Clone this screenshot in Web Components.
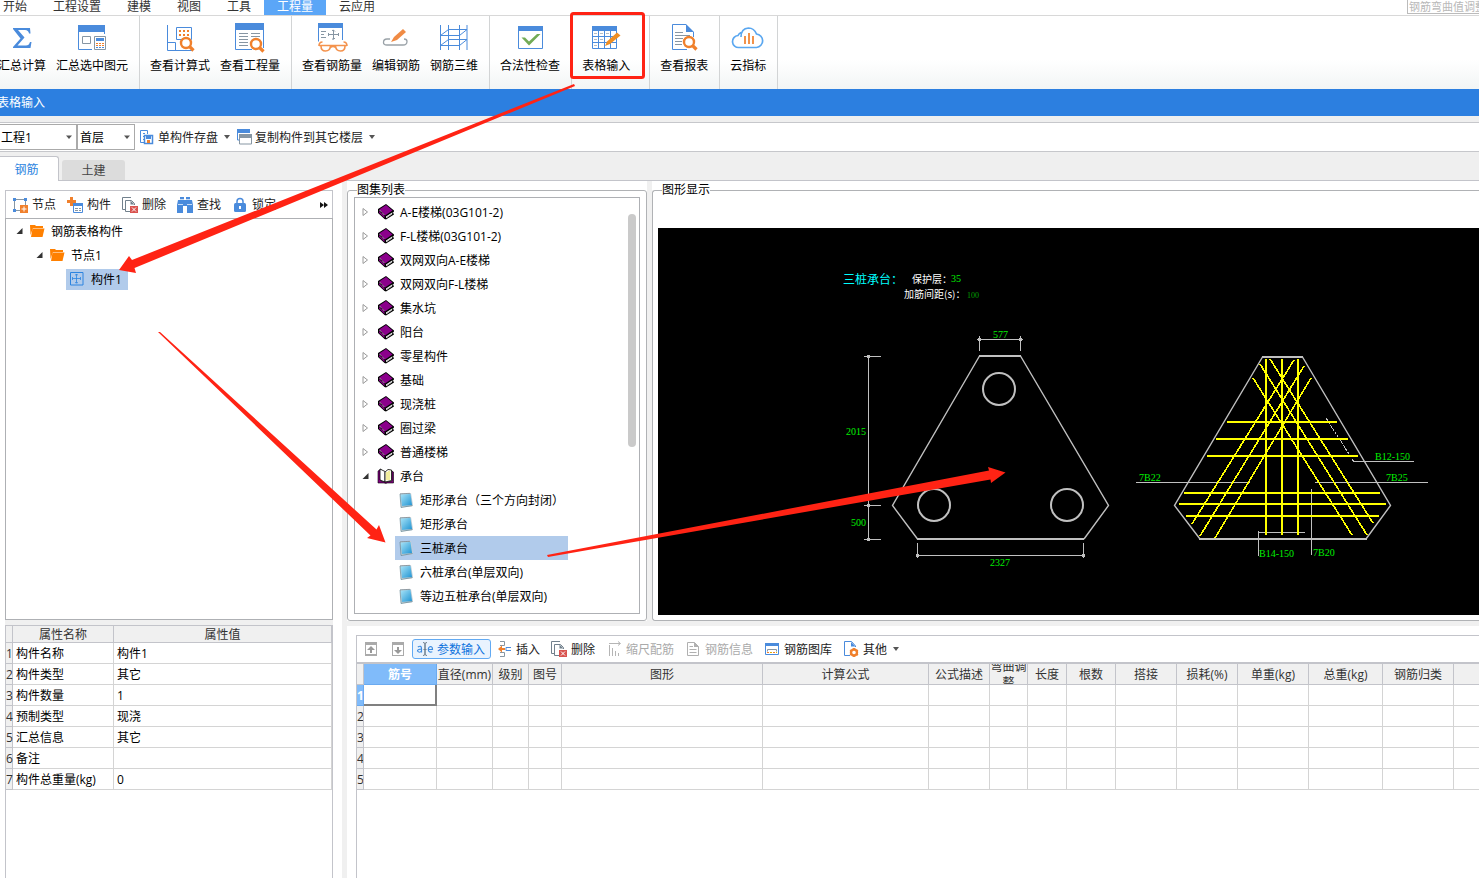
<!DOCTYPE html>
<html lang="zh-CN">
<head>
<meta charset="utf-8">
<title>表格输入</title>
<style>
html, body { margin: 0; height: 100%; }
body { font: 12px/16px "Open Sans", "Noto Sans CJK SC", sans-serif; color: #000; background: #fff; overflow: hidden; }
</style>
</head>
<body>
<rebar-app></rebar-app>
<script>
const define = (name, html, setup) => {
  const tpl = document.createElement('template');
  tpl.innerHTML = '<style>*{box-sizing:border-box}button,input,select{font:inherit;color:inherit;margin:0}</style>' + html;
  customElements.define(name, class extends HTMLElement {
    constructor() {
      super();
      this.attachShadow({ mode: 'open' }).append(tpl.content.cloneNode(true));
    }
    connectedCallback() {
      if (setup && !this.ready) { this.ready = true; setup.call(this, this.shadowRoot); }
    }
  });
};

const B = '#4a8bdc', O = '#f0802c', G = '#8796a3';
const lens = (x, y) => `<circle cx="${x}" cy="${y}" r="5" fill="#fff" stroke="${O}" stroke-width="2.4"/><path d="M${x + 3.5} ${y + 3.5}l4 4" stroke="${O}" stroke-width="3.2"/>`;
const ICONS = {
  sigma: [32, `<path d="M7 6H24L24.500 11.500H23Q22.500 8 19 8H12L18.500 15.500L11.500 23.500H20Q23 23.500 24 20H25.500L24.500 26H7V25L14.500 16.500L7 7Z" fill="${B}"/>`],
  pick: [32, `<path d="M2.500 9V27.500H16M28.500 9V12" fill="none" stroke="${B}"/><path d="M2 3h27v7H2z" fill="${B}"/><path d="M6.500 14.500h8v7h-8z" fill="none" stroke="${G}"/><path d="M18.500 14.500h11v13h-11z" fill="#fff" stroke="${G}"/><path d="M20 16h8v3h-8z" fill="${B}"/><path d="M20 21h2v1h-2zm3 0h2v1h-2zm3 0h2v1h-2zM20 23h2v1h-2zm3 0h2v1h-2zm3 0h2v1h-2z" fill="${O}"/><path d="M20 25h2v1h-2zm3 0h2v1h-2zm3 0h2v1h-2z" fill="${B}"/>`],
  formula: [32, `<g fill="none" stroke="${B}"><path d="M3.500 3V28.500H29M3.500 20.500H11.500V28"/><path d="M12.500 5.500h15v12h-15z"/></g><path d="M15 8h2v2h-2zm4 0h2v2h-2zm4 0h2v2h-2zM15 12h2v2h-2zm4 0h2v2h-2zm4 0h2v2h-2z" fill="${O}"/>${lens(22, 21)}`],
  quantity: [32, `<path d="M1.500 6V27.500H18M29.500 6V26" fill="none" stroke="${B}"/><path d="M1 1h29v7H1z" fill="${B}"/><path d="M5 11.500h9M17 11.500h9M5 14.500h9M17 14.500h9M5 17.500h9M5 20.500h9M5 23.500h9" stroke="${G}"/>${lens(22, 22)}`],
  rebarqty: [32, `<path d="M2.500 5V19.500M26.500 5V18" stroke="${B}"/><path d="M2 1h25v5H2z" fill="${B}"/><path d="M5 9.500h5M5 12.500h3M5 15.500h5M17.500 8v9M12.500 12.500h10" stroke="${G}"/><path d="M16 8.500q2-1 3 1M16 17q2 1 3-1M12.500 11v3M22.500 11v3" fill="none" stroke="${G}"/><g fill="none" stroke="#f4924c" stroke-width="1.600"><path d="M3 24Q3 20 6.500 20M31 24Q31 20 27.500 20"/><path d="M3 23.500H31M14.500 25.500Q17 23.500 19.500 25.500"/><path d="M5 24Q5 29 9.500 29Q14 29 14.500 24M19.500 24Q20 29 24.500 29Q29 29 29 24"/></g>`],
  editbar: [32, `<path d="M10 17H7Q3.500 17 3.500 20.500Q3.500 23 7 23H23Q27 23 27 19.500Q27 17 24 17" fill="none" stroke="#9aa2a8" stroke-width="1.300"/><path d="M11 20L14 15L23 7L26 10L17 18Z" fill="#f08b45"/>`],
  bars3d: [32, `<path d="M2.500 3V28M10.500 3V28M21.500 3V28M29 3V28M10.500 7.500H29M2.500 13.500H21.500M10.500 17.500H29M2.500 23.500H21.500M2.500 13.500L10.500 7.500M21.500 13.500L29 7.500M2.500 23.500L10.500 17.500M21.500 23.500L29 17.500" fill="none" stroke="${B}"/>`],
  check: [32, `<path d="M4.500 5V26.500H28.500V5" fill="none" stroke="${B}"/><path d="M4 4h25v5H4z" fill="${B}"/><path d="M7.500 15.500H11L15 19.500L23 12H26.500L15 23.500Z" fill="#72ab56"/>`],
  gridin: [32, `<path d="M2.500 5V26.500H26.500V5" fill="none" stroke="${B}"/><path d="M2 4h25v5H2z" fill="${B}"/><path d="M3 14.500H26M3 20.500H26M8.500 9V26M14.500 9V26M20.500 9V26" stroke="${B}"/><path d="M4 11.500h3M10 11.500h3M16 11.500h3M4 17.500h3M10 17.500h3M4 23.500h3" stroke="#b4bcc4"/><path d="M15 24L17 19.500L27 10.500L30.500 13.500L20 22Z" fill="#ef8e22"/>`],
  report: [32, `<path d="M18 2.500H4.500V27.500H19M25.500 10V15" fill="none" stroke="${B}"/><path d="M18 2L26 10H18z" fill="${B}"/><path d="M7 10.500H15M7 13.500H22M7 16.500H15M7 19.500H14M7 22.500H14" stroke="${G}"/>${lens(21, 20)}`],
  cloud: [32, `<path d="M9 25.500H7A6 6 0 0 1 6 13.500A6 6 0 0 1 9 10.500M9 15Q9 6.500 16.500 6Q22 6 24.500 12A7 6.800 0 0 1 24.500 25.500H8" fill="none" stroke="#5aa7f0" stroke-width="1.700"/><path d="M13 14v8M17 11v11M21 14v8" stroke="${O}" stroke-width="1.700"/>`],
  save: [16, `<path d="M7 13.500H.5V1.500H7.500V5" fill="none" stroke="${B}"/><path d="M3 4h2v1H3zm0 3h2v1H3zm0 3h2v1H3z" fill="${B}"/><path d="M4.500 6.500h8v8h-8z" fill="#fff" stroke="${B}" stroke-width="1.500"/><path d="M6 7h5v3H6z" fill="${B}"/><path d="M7 11h3v3H7z" fill="${O}"/>`],
  copy: [16, `<path d="M.5 2V11H2M12.500 2V4" fill="none" stroke="${B}"/><path d="M0 0h13v4H0z" fill="${B}"/><path d="M2.500 6.500h12v8.500h-12z" fill="#fff" stroke="${G}"/><path d="M2 5h13v4H2z" fill="${G}"/>`],
  node: [16, `<path d="M2.500 2.500h11v11h-11z" fill="none" stroke="${G}"/><path d="M1 1h3v3H1zM12 1h3v3h-3zM1 12h3v3H1z" fill="${B}"/><path d="M8 8h8v8H8z" fill="${O}"/><path d="M12 9.500v5M9.500 12h5" stroke="#fff"/>`],
  member: [16, `<path d="M3 0h3v3h3v3H6v3H3V6H0V3h3z" fill="${O}"/><path d="M6.500 7.500h9v8h-9z" fill="#fff" stroke="${B}"/><path d="M6 6h10v3H6z" fill="${B}"/><path d="M8 11.500h3M12 11.500h2M8 13.500h3M12 13.500h2" stroke="${G}"/>`],
  remove: [16, `<path d="M3 12.500H.5V.5H9M3.500 14.500V3.500H9.500L12.500 6.500V8M3.500 14.500H8" fill="none" stroke="#72818d"/><path d="M8.500 3.500v4h4z" fill="#72818d"/><path d="M8 9h8v7H8z" fill="#d9534f"/><path d="M10 10.500l4 4M14 10.500l-4 4" stroke="#fff"/>`],
  find: [16, `<path d="M3 0h4v3h2V0h4v3h2l1 5v8H10V9H6v7H0V8l1-5h2z" fill="${B}"/><path d="M1 7.500h5M10 7.500h5M3 2.500h4M9 2.500h4" stroke="#fff" stroke-width=".7"/>`],
  lock: [16, `<path d="M5 7V4.500a3 3 0 0 1 6 0V7" fill="none" stroke="${B}" stroke-width="1.500"/><rect x="2" y="6" width="12" height="9" rx="1.500" fill="${B}"/><path d="M7 9h2v3H7z" fill="#fff"/>`],
  folder: [16, `<path d="M1 2h5l1 1h7v2H4L1.500 12z" fill="#ff8000"/><path d="M3.500 5.500h12l-2 8.500H2z" fill="#ff8000"/>`],
  part: [16, `<path d="M1.500 1.500h12.500v12.500H1.500z" fill="none" stroke="#2c84e0"/><path d="M7.500 3v9M3.500 7.500h8M6 4q2-1 3 0M6 11.500q2 1 3 0M3.500 6v3M11.500 6v3" fill="none" stroke="#2c84e0" stroke-width=".8"/>`],
  book: [16, `<path d="M8 0L16 6.500V7.500L15 8.500L16 10.500L8 15.500L6.500 15L0 9V5Z" fill="#000"/><path d="M8 1L14.500 6.500L7 11.500L1.200 5.500Z" fill="#8b008b"/><path d="M1 7L6.500 12v2L1 8.700Z" fill="#8b008b"/><path d="M8 12.500L14.500 8.200L14 10.300L8.300 14.200Z" fill="#fff"/><path d="M1.500 6L7 11.800" stroke="#fff" stroke-width=".9" stroke-dasharray="1 1"/><path d="M9 13.200l5-3.300" stroke="#888" stroke-width=".6"/>`],
  bookopen: [16, `<path d="M0 3L3 1V13L8 14L14 13V3L15.500 4V15H9L8 15.500L6 15H0Z" fill="#800080" stroke="#000" stroke-width=".6"/><path d="M2 1L7 3.500V14L2 12Z" fill="#fff" stroke="#000" stroke-width=".8"/><path d="M7 4L10 1.500L13.500 2V12.500L7 14Z" fill="#fffef0" stroke="#000" stroke-width=".8"/><path d="M9 4v8M11 3v9" stroke="#e3dc48"/>`],
  note: [16, `<defs><linearGradient id="n" x2="1" y2="1"><stop stop-color="#a8e4f8"/><stop offset="1" stop-color="#1f93d2"/></linearGradient></defs><path d="M2 1.500L13 1L15 13L14 14.500L3 15.500Z" fill="#c2ced6"/><path d="M2.500 2.500L12.500 2L14 13L4 14Z" fill="url(#n)"/><path d="M2.500 1.800L12.500 1.300" stroke="#526069" stroke-dasharray="1 1"/><path d="M2 2L3 15.500L14.500 13.500" fill="none" stroke="#527887" stroke-width=".6"/>`],
  up: [16, `<path d="M2 1h12v3H2zM2 13h12v2H2z" fill="#aaa"/><path d="M2.500 2v12M13.500 2v12" stroke="#aaa"/><path d="M8 5l-4 4h3v3h2V9h3z" fill="#999"/>`],
  down: [16, `<path d="M2 1h12v3H2zM2 14h12v1H2z" fill="#aaa"/><path d="M2.500 2v12M13.500 2v12" stroke="#aaa"/><path d="M8 13l-4-4h3V6h2v3h3z" fill="#999"/>`],
  param: [16, `<g fill="none" stroke="#3d8be0" stroke-width="1.200"><path d="M.8 6Q4.500 4 4.500 7.500V11.500M4.500 8Q.5 8 .5 10Q2.500 12.500 4.500 10"/><path d="M11.500 8.500H15.500Q15.500 5.500 13.500 5.500Q11.300 6 11.300 8.500Q11.500 12 15.300 10.800"/></g><path d="M6 1.500q2 0 2 1.500v10q0 1.500-2 1.500M10 1.500q-2 0-2 1.500v10q0 1.500 2 1.500M6.500 8.500h3" fill="none" stroke="#6f7f8c"/>`],
  insert: [16, `<path d="M4 .5H8.500V4.500H4M4 11.500H8.500V15.500H4" fill="none" stroke="${G}"/><path d="M15 6.500h-5v3h5" fill="none" stroke="${B}"/><path d="M2 8L6 4.500V7H9V9H6V11.500Z" fill="${O}"/>`],
  scale: [16, `<path d="M3.500 4V15M6.500 7V15M9.500 10V15M12.500 12V15" stroke="#b5b5b5"/><path d="M3 2.500H14M12 .5L14.500 2.500L12 4.500" fill="none" stroke="#b5b5b5"/>`],
  info: [16, `<path d="M9.500 1.500H2.500V14.500H13.500V5.500Z" fill="none" stroke="#b0b0b0"/><path d="M9 1v5h5z" fill="#b0b0b0"/><path d="M4.500 5.500H8M4.500 8.500H11.500M4.500 11.500H11.500" stroke="#b0b0b0"/>`],
  library: [16, `<path d="M1.500 3V13.500H14.500V3" fill="#fff" stroke="${B}"/><path d="M1 2h14v3H1z" fill="${B}"/><path d="M3.500 10.500V8.500H12.500V10.500" fill="none" stroke="${G}"/><path d="M3 11h2v1H3zm6 0h2v1H9z" fill="${O}"/><path d="M6 11h2v1H6zm6 0h1v1h-1z" fill="#e0b000"/>`],
  other: [16, `<path d="M8.500 .5H1.500V14.500H7M8.500 .5L12.500 5V6" fill="none" stroke="${B}"/><path d="M8 1v4.500h4.500z" fill="${B}"/><circle cx="11" cy="11.500" r="3" fill="none" stroke="${O}" stroke-width="2.400"/><path d="M11 7v2M11 14v2M7 9.300l2 1M13 13l2 1M7 13.700l2-1M13 10.300l2-1" stroke="${O}" stroke-width="1.800"/>`],
  more: [16, `<path d="M4 5l4 3-4 3zM8 5l4 3-4 3z" fill="#111"/>`],
  caret: [8, `<path d="M1 2.500h6L4 6z" fill="#555"/>`],
  closed: [8, `<path d="M1 .5V7.500L5.500 4Z" fill="#fff" stroke="#999"/>`],
  opened: [8, `<path d="M6.500 1V7H.5Z" fill="#333"/>`]
};

define('ui-icon', `<style>:host{display:block;flex:none}svg{display:block;overflow:visible}</style><svg aria-hidden="true"></svg>`, function (root) {
  const [size, art] = ICONS[this.getAttribute('name')], svg = root.querySelector('svg');
  svg.setAttribute('width', size);
  svg.setAttribute('height', size);
  svg.innerHTML = art;
});

/* Puts the icon named by the host's icon attribute in the template's .icon place. */
function placeIcon(host, root) {
  const icon = document.createElement('ui-icon');
  icon.setAttribute('name', host.getAttribute('icon'));
  root.querySelector('.icon').replaceWith(icon);
}

define('menu-bar', `<style>
:host{display:flex;height:16px;border-bottom:1px solid #d8d8d8;background:#fff;color:#333;overflow:hidden}
nav{display:flex;margin-left:-10px;height:16px}
a{padding:0 13px;line-height:14px;color:inherit;text-decoration:none}
a[aria-current]{background:#5ba6f7;color:#fff}
input{margin-left:auto;width:72px;height:14px;padding:0 0 0 1px;border:solid #bbb;border-width:0 0 1px 1px;border-radius:0;outline:0;background:#fff;font-size:11px;line-height:13px}
input::placeholder{color:#b8b8b8;opacity:1}
</style><nav><a href="#">开始</a><a href="#">工程设置</a><a href="#">建模</a><a href="#">视图</a><a href="#">工具</a><a href="#" aria-current="page">工程量</a><a href="#">云应用</a></nav><input aria-label="搜索" placeholder="钢筋弯曲值调整">`);

define('ribbon-button', `<style>
:host{display:block}
button{display:flex;flex-direction:column;align-items:center;gap:4px;padding:6px 5px 0;border:0;background:none;white-space:nowrap}
</style><button><span class="icon"></span><span><slot></slot></span></button>`, function (root) { placeIcon(this, root); });

define('ribbon-group', `<style>
:host{display:flex;padding:0 6px 0 5px;border-right:1px solid #d2d4d5}
:host([wide]){padding-right:14px}
</style><slot></slot>`);

define('ribbon-bar', `<style>
:host{display:block;height:73px;overflow:hidden;background:linear-gradient(#fff 60%,#f2f5f5)}
div{display:flex;height:100%;margin-left:-12px}
</style><div>
<ribbon-group><ribbon-button icon="sigma">汇总计算</ribbon-button><ribbon-button icon="pick">汇总选中图元</ribbon-button></ribbon-group>
<ribbon-group><ribbon-button icon="formula">查看计算式</ribbon-button><ribbon-button icon="quantity">查看工程量</ribbon-button></ribbon-group>
<ribbon-group><ribbon-button icon="rebarqty">查看钢筋量</ribbon-button><ribbon-button icon="editbar">编辑钢筋</ribbon-button><ribbon-button icon="bars3d">钢筋三维</ribbon-button></ribbon-group>
<ribbon-group><ribbon-button icon="check">合法性检查</ribbon-button></ribbon-group>
<ribbon-group wide><ribbon-button icon="gridin">表格输入</ribbon-button></ribbon-group>
<ribbon-group><ribbon-button icon="report">查看报表</ribbon-button></ribbon-group>
<ribbon-group><ribbon-button icon="cloud">云指标</ribbon-button></ribbon-group>
</div>`);

define('tool-button', `<style>
:host{display:block;flex:none}
button{display:flex;align-items:center;gap:var(--tool-gap,4px);height:20px;padding:0 var(--tool-end,5px) 0 4px;border:1px solid transparent;border-radius:3px;background:none;white-space:nowrap;color:#222}
:host([active]) button{background:#e9f3fe;border-color:#62aaf3;color:#0f73dd}
:host([off]) button{color:#aaa}
.text{padding-top:1px}
:host([label]) .text{display:none}
:host([menu]) button::after{content:"";margin-left:calc(6px - var(--tool-gap,4px));border:3px solid transparent;border-top:4px solid #555;border-bottom:0}
</style><button><span class="icon"></span><span class="text"><slot></slot></span></button>`, function (root) {
  placeIcon(this, root);
  const button = root.querySelector('button');
  if (this.hasAttribute('off')) button.disabled = true;
  if (this.hasAttribute('label')) button.setAttribute('aria-label', this.getAttribute('label'));
});

define('pick-list', `<style>
:host{display:flex;position:relative;height:26px}
select{width:100%;height:100%;appearance:none;border:1px solid #aaa;border-radius:0;padding:2px 16px 0 2px;background:#fff;color:#000;outline:0}
ui-icon{position:absolute;right:4px;top:9px;pointer-events:none}
</style><select></select><ui-icon name="caret"></ui-icon>`, function (root) {
  const s = root.querySelector('select');
  s.setAttribute('aria-label', this.getAttribute('label'));
  s.add(new Option(this.getAttribute('value')));
});

define('project-bar', `<style>
:host{display:flex;align-items:center;height:36px;border-top:6px solid #efefef;background:#fff;box-shadow:inset 0 1px #c6c7cb,inset 0 -1px #c6c7cb;overflow:hidden;--tool-gap:2px;--tool-end:1px}
.p{width:79px;margin-left:-2px}.f{width:58px}
</style><pick-list class="p" label="工程" value="工程1"></pick-list><pick-list class="f" label="楼层" value="首层"></pick-list><tool-button icon="save" menu>单构件存盘</tool-button><tool-button icon="copy" menu>复制构件到其它楼层</tool-button>`);

define('kind-tabs', `<style>
:host{display:flex;align-items:flex-end;gap:3px;height:29px;background:#efefef;box-shadow:inset 0 -1px #c3c4ca}
button{border:0;padding:2px 0 0}
.on{width:59px;height:25px;padding-right:5px;background:#fff;color:#2c84e0;border:solid #c3c4ca;border-width:1px 1px 0 0;border-radius:0 3px 0 0}
.off{width:63px;height:20px;margin-bottom:1px;background:#dcdcdc;color:#444;border-radius:3px 3px 0 0}
</style><button class="on">钢筋</button><button class="off">土建</button>`);

define('tree-item', `<style>
:host{display:flex;align-items:center;height:24px;padding-left:var(--pad)}
:host([level="1"]){padding-left:calc(var(--pad) + 20px)}
:host([level="2"]){padding-left:calc(var(--pad) + 40px)}
.twist{width:var(--twist);flex:none}
.label{display:flex;align-items:center;gap:6px;height:var(--pick-h);padding:0 6px 0 3px;min-width:var(--pick-w);white-space:nowrap}
.text{padding-top:2px}
:host([selected]) .label{background:#b1cbeb}
</style><span class="twist"></span><span class="label"><span class="icon"></span><span class="text"><slot></slot></span></span>`, function (root) {
  placeIcon(this, root);
  const state = this.getAttribute('state');
  if (state) root.querySelector('.twist').innerHTML = `<ui-icon name="${state}"></ui-icon>`;
});

define('member-panel', `<style>
:host{display:flex;flex-direction:column;min-height:0}
.bar{display:flex;align-items:center;height:28px;padding-left:1px;border:1px solid #c3c4ca;border-bottom:0}
.bar tool-button:last-child{margin-left:auto;margin-right:-6px}
.tree{flex:1;min-height:0;border:1px solid #aeb0b4;--pad:10px;--twist:10px;--pick-h:21px;--pick-w:0}
</style><div class="bar"><tool-button icon="node">节点</tool-button><tool-button icon="member">构件</tool-button><tool-button icon="remove">删除</tool-button><tool-button icon="find">查找</tool-button><tool-button icon="lock">锁定</tool-button><tool-button icon="more" label="更多"></tool-button></div>
<div class="tree"><tree-item icon="folder" state="opened">钢筋表格构件</tree-item><tree-item icon="folder" state="opened" level="1">节点1</tree-item><tree-item icon="part" level="2" selected>构件1</tree-item></div>`);

define('property-grid', `<style>
:host{display:block;border:solid #c3c4ca;border-width:1px 1px 0}
table{width:100%;table-layout:fixed;border-collapse:separate;border-spacing:0}
th,td{height:21px;padding:2px 0 0;border:solid #d4d4d4;border-width:0 1px 1px 0;font-weight:400;text-align:left;white-space:nowrap;line-height:16px}
td{padding-left:3px}
th{background:#f0f0f0;color:#333;border-color:#c3c4ca}
thead th{height:17px;line-height:14px;text-align:center}
</style><table><colgroup><col style="width:7px"><col style="width:101px"><col></colgroup><thead><tr><th></th><th>属性名称</th><th>属性值</th></tr></thead><tbody></tbody></table>`, function (root) {
  const rows = [['构件名称', '构件1'], ['构件类型', '其它'], ['构件数量', '1'], ['预制类型', '现浇'], ['汇总信息', '其它'], ['备注', ''], ['构件总重量(kg)', '0']];
  root.querySelector('tbody').innerHTML = rows.map((r, i) => `<tr><th>${i + 1}</th><td>${r[0]}</td><td>${r[1]}</td></tr>`).join('');
});

define('group-box', `<style>
:host{display:flex;min-width:0;min-height:0}
fieldset{flex:1;display:flex;min-width:0;min-height:0;margin:0;padding:0 6px 6px;border:1px solid #b0b2b5;border-radius:3px}
:host([bleed]) fieldset{padding:31px 0 5px 5px;border-right:0;border-radius:3px 0 0 3px}
legend{padding:0;margin-left:3px;height:14px;line-height:14px;background:#fff}
:host([bleed]) legend{margin-left:4px}
</style><fieldset><legend></legend><slot></slot></fieldset>`, function (root) { root.querySelector('legend').textContent = this.getAttribute('label'); });

define('atlas-tree', `<style>
:host{display:block;position:relative;flex:1;min-width:0;padding-top:2px;border:1px solid #aeb0b4;overflow:hidden;--pad:7px;--twist:13px;--pick-h:24px;--pick-w:173px}
i{position:absolute;right:3px;top:16px;width:8px;height:233px;border-radius:4px;background:#cacaca}
</style><div></div><i></i>`, function (root) {
  const books = ['A-E楼梯(03G101-2)', 'F-L楼梯(03G101-2)', '双网双向A-E楼梯', '双网双向F-L楼梯', '集水坑', '阳台', '零星构件', '基础', '现浇桩', '圈过梁', '普通楼梯'];
  const caps = ['矩形承台（三个方向封闭）', '矩形承台', '三桩承台', '六桩承台(单层双向)', '等边五桩承台(单层双向)'];
  root.querySelector('div').innerHTML = books.map(b => `<tree-item icon="book" state="closed">${b}</tree-item>`).join('')
    + '<tree-item icon="bookopen" state="opened">承台</tree-item>'
    + caps.map((c, i) => `<tree-item icon="note" level="1"${i === 2 ? ' selected' : ''}>${c}</tree-item>`).join('');
});

define('cap-drawing', `<style>
:host{display:block;flex:1;min-width:0;background:#000}
svg{display:block;width:100%;height:100%}
.w{fill:none;stroke:#c0c0c0;shape-rendering:crispEdges}
.slope{fill:none;stroke:#c0c0c0;stroke-width:1.4}
.y{fill:none;stroke:#ff0;stroke-width:2;shape-rendering:crispEdges}
.y.slope{stroke:#ff0;stroke-width:1.6}
.g{fill:#00f000;font:10px "Liberation Serif",serif}
.c{fill:#fff;font:10px "Noto Sans CJK SC",sans-serif}
.h{fill:#0ff;font:12px "Noto Sans CJK SC",sans-serif}
.s{fill:#00a000;font-size:8px}
</style><svg role="img" aria-label="三桩承台"><g transform="translate(-658 -228)">
<path class="slope" d="M979.500 356L892.500 505.500L917.500 539M1020.500 356L1108.500 505.500L1084 539M1262.500 357L1174.500 505.500L1200 539M1302.500 357L1390.500 505.500L1366 539"/>
<path class="w" stroke-width="2" d="M979 356H1021M917 539H1084M1262 357H1303M1199 539H1367"/>
<g class="w" stroke-width="2" style="shape-rendering:auto"><circle cx="999" cy="389" r="16"/><circle cx="934" cy="505" r="16"/><circle cx="1067" cy="505" r="16"/></g>
<path class="w" d="M868.500 356V540M864 356.500H881M864 505.500H881M864 539.500H881M979.500 336V351M1020.500 336V351M977 339.500H1023M917.500 543V558M1083.500 543V558M916 555.500H1085M1136 482.500H1250M1315 482.500H1428M1353 461.500H1414M1258.500 531V556M1258 532.500H1305M1311.500 489V555"/>
<path class="w" stroke-width="3" d="M867 356.500h3M867 505.500h3M867 539.500h3M978 339.500h3M1019 339.500h3M916 555.500h3M1082 555.500h3"/>
<path class="w" stroke-dasharray="3 1" d="M1326 418L1354 462"/>
<path class="y" d="M1266 359V535M1282 359V535M1298 359V535M1227 422H1337M1216 439H1348M1207 456H1358M1184 493H1380M1179 504H1386M1186 516H1379"/>
<path class="y slope" d="M1294 360L1192 524M1304 366L1200 536M1311 378L1215 538M1270 359L1373 523M1260 364L1367 535M1253 378L1352 535"/>
<text class="h" x="843" y="284">三桩承台：</text><text class="c" x="912" y="283">保护层：</text><text class="g" x="951" y="282">35</text>
<text class="c" x="904" y="298">加筋间距(s)：</text><text class="g s" x="967" y="298">100</text>
<g class="g"><text x="993" y="338">577</text><text x="846" y="435">2015</text><text x="851" y="526">500</text><text x="990" y="566">2327</text><text x="1139" y="481">7B22</text><text x="1386" y="481">7B25</text><text x="1375" y="460">B12-150</text><text x="1259" y="557">B14-150</text><text x="1313" y="556">7B20</text></g>
</g></svg>`);

define('rebar-grid', `<style>
:host{display:flex;flex-direction:column;min-width:0;padding:9px 0 0 9px;background:#fff}
.box{flex:1;border:solid #c3c4ca;border-width:1px 0 0 1px;min-height:0;overflow:hidden}
.bar{display:flex;align-items:center;height:28px;padding-left:1px;border-bottom:2px solid #c3c4ca}
table{width:100%;table-layout:fixed;border-collapse:separate;border-spacing:0}
th,td{height:21px;padding:0;border:solid #d4d4d4;border-width:0 1px 1px 0;font-weight:400;white-space:nowrap}
th:last-child,td:last-child{border-right:0}
th{background:#f0f0f0;color:#333;border-color:#c3c4ca;text-align:center}
thead th div{display:flex;align-items:center;justify-content:center;height:20px;padding-top:2px;overflow:hidden;line-height:16px}
thead th.wrap div{white-space:normal}
tbody th{padding-top:2px;text-align:left;overflow:hidden;border-right-width:1px}
th.on{background:#80bbfa;border-color:#6aaaf0;color:#fff;font-weight:700}
td.cur{border:solid #808080;border-width:0 2px 2px 0}
</style><div class="box"><div class="bar"><tool-button icon="up" label="上移" off></tool-button><tool-button icon="down" label="下移" off></tool-button><tool-button icon="param" active>参数输入</tool-button><tool-button icon="insert">插入</tool-button><tool-button icon="remove">删除</tool-button><tool-button icon="scale" off>缩尺配筋</tool-button><tool-button icon="info" off>钢筋信息</tool-button><tool-button icon="library">钢筋图库</tool-button><tool-button icon="other" menu>其他</tool-button></div><table></table></div>`, function (root) {
  const cols = [['', 7], ['筋号', 73], ['直径(mm)', 56], ['级别', 36], ['图号', 33], ['图形', 201], ['计算公式', 166], ['公式描述', 61], ['弯曲调整', 38], ['长度', 39], ['根数', 49], ['搭接', 61], ['损耗(%)', 61], ['单重(kg)', 71], ['总重(kg)', 74], ['钢筋归类', 71], ['', 0]];
  const cls = i => i === 1 ? ' class="on"' : i === 8 ? ' class="wrap"' : '';
  root.querySelector('table').innerHTML = `<colgroup>${cols.map(c => c[1] ? `<col style="width:${c[1]}px">` : '<col>').join('')}</colgroup>`
    + `<thead><tr>${cols.map((c, i) => `<th${cls(i)}><div>${c[0]}</div></th>`).join('')}</tr></thead><tbody>`
    + [1, 2, 3, 4, 5].map(n => `<tr><th${n === 1 ? ' class="on"' : ''}>${n}</th>${cols.slice(1).map((c, i) => `<td${n === 1 && i === 0 ? ' class="cur"' : ''}></td>`).join('')}</tr>`).join('') + '</tbody>';
});

define('guide-marks', `<style>
:host{position:absolute;inset:0;overflow:hidden;pointer-events:none}
svg{width:100%;height:100%;display:block}
</style><svg aria-hidden="true" fill="#ff2314"><rect x="571.500" y="13.500" width="72" height="64" rx="2" fill="none" stroke="#ff2314" stroke-width="3"/>
<path d="M574 84L132 260L129 256L119 270L136 273L134.500 268L575 86Z"/>
<path d="M158 332L370.500 535.500L367 538L385.500 542.500L379 525L376.500 529.500L160 332Z"/>
<path d="M547 555L989 470.500L988 467L1005.500 472.500L991 483L990.500 479.500L548 557Z"/></svg>`);

define('rebar-app', `<style>
:host{display:flex;flex-direction:column;height:100vh;position:relative;overflow:hidden}
menu-bar,ribbon-bar,h1,project-bar,kind-tabs{flex:none}
h1{margin:0;height:27px;text-indent:-3px;font:inherit;line-height:27px;background:#2c7fe0;color:#fff}
main{flex:1;min-height:0;display:grid;grid-template-columns:342px minmax(0,1fr);background:#fff}
.left{display:flex;flex-direction:column;min-height:0;padding:9px 9px 0 5px}
member-panel{flex:1}
.prop{flex:none;height:258px;display:flex;border-top:5px solid #f0f0f0}
property-grid{flex:1}
.right{display:flex;flex-direction:column;min-width:0;min-height:0;background:linear-gradient(90deg,#f0f0f0 5px,#fff 5px)}
.top{flex:1;min-height:0;display:grid;grid-template-columns:300px minmax(0,1fr);gap:5px;margin-left:5px;padding-top:2px;background:linear-gradient(90deg,#fff 300px,#f0f0f0 300px,#f0f0f0 305px,#fff 305px)}
rebar-grid{flex:none;height:257px;margin-left:5px;border-top:5px solid #f0f0f0}
</style>
<menu-bar></menu-bar><ribbon-bar></ribbon-bar><h1>表格输入</h1><project-bar></project-bar><kind-tabs></kind-tabs>
<main><section class="left"><member-panel></member-panel><div class="prop"><property-grid></property-grid></div></section>
<section class="right"><div class="top"><group-box label="图集列表"><atlas-tree></atlas-tree></group-box><group-box label="图形显示" bleed><cap-drawing></cap-drawing></group-box></div><rebar-grid></rebar-grid></section></main>
<guide-marks></guide-marks>`);
</script>
</body>
</html>
